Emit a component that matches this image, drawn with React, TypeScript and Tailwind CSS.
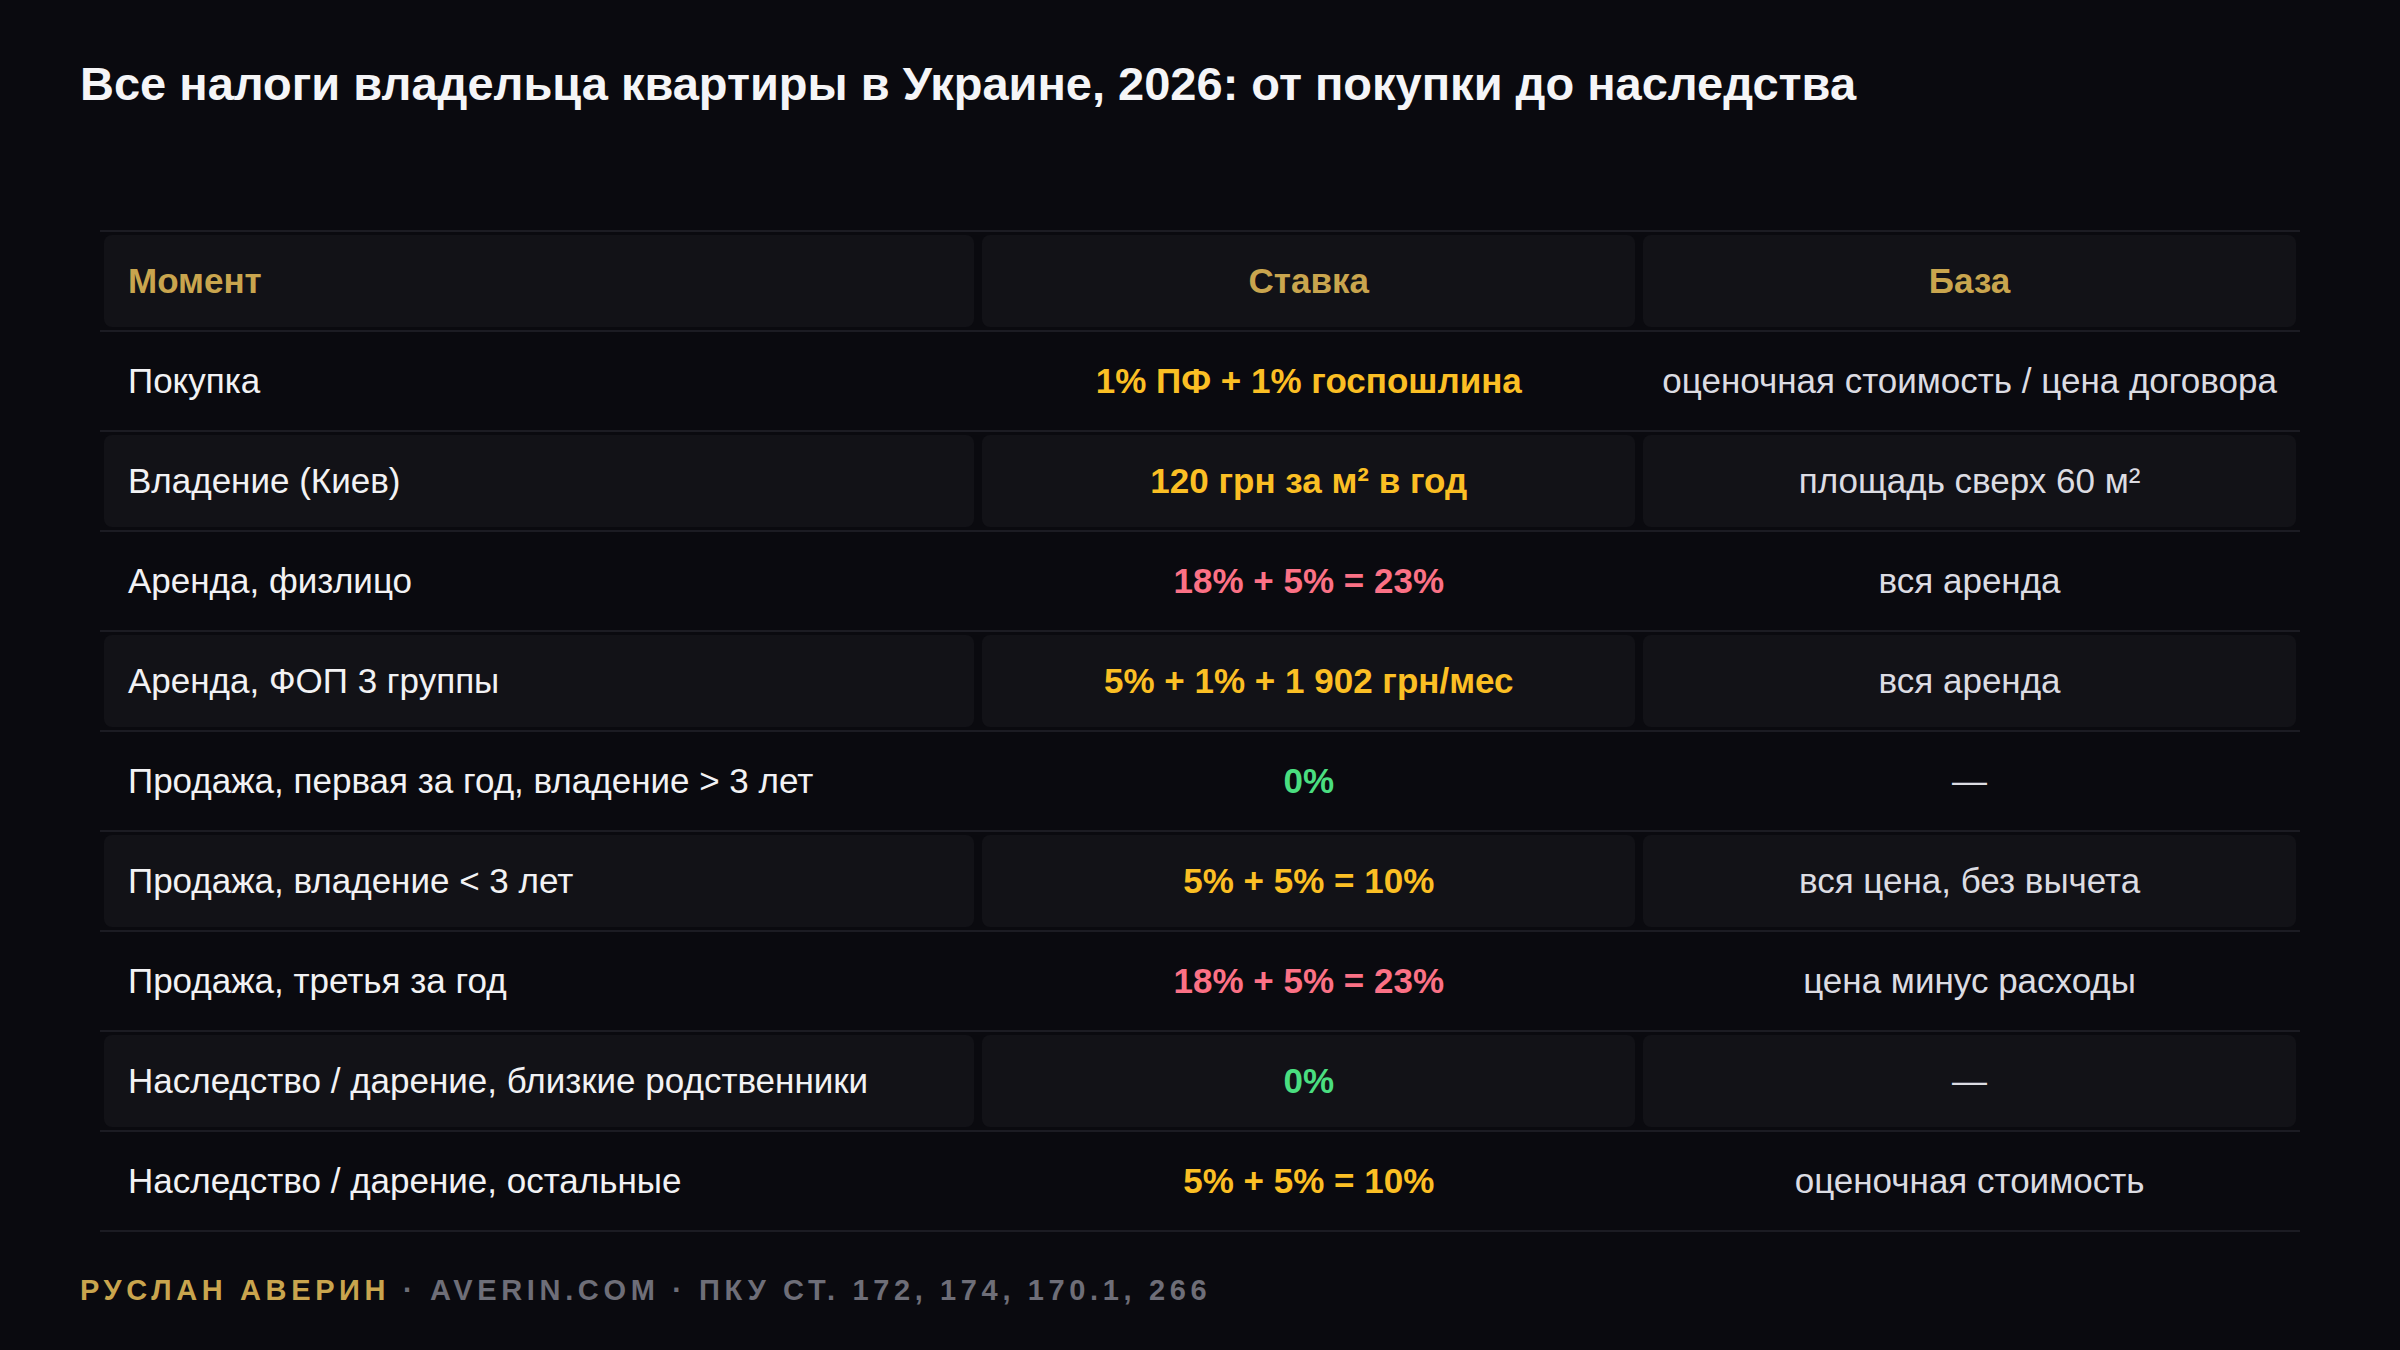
const rows = [
  { moment: 'Покупка', rate: '1% ПФ + 1% госпошлина', tone: 'yellow', base: 'оценочная стоимость / цена договора' },
  { moment: 'Владение (Киев)', rate: '120 грн за м² в год', tone: 'yellow', base: 'площадь сверх 60 м²' },
  { moment: 'Аренда, физлицо', rate: '18% + 5% = 23%', tone: 'red', base: 'вся аренда' },
  { moment: 'Аренда, ФОП 3 группы', rate: '5% + 1% + 1 902 грн/мес', tone: 'yellow', base: 'вся аренда' },
  { moment: 'Продажа, первая за год, владение > 3 лет', rate: '0%', tone: 'green', base: '—' },
  { moment: 'Продажа, владение < 3 лет', rate: '5% + 5% = 10%', tone: 'yellow', base: 'вся цена, без вычета' },
  { moment: 'Продажа, третья за год', rate: '18% + 5% = 23%', tone: 'red', base: 'цена минус расходы' },
  { moment: 'Наследство / дарение, близкие родственники', rate: '0%', tone: 'green', base: '—' },
  { moment: 'Наследство / дарение, остальные', rate: '5% + 5% = 10%', tone: 'yellow', base: 'оценочная стоимость' },
];

const toneClass: Record<string, string> = {
  yellow: 'text-[#fbbf24]',
  red: 'text-[#fb7185]',
  green: 'text-[#4ade80]',
};

export default function App() {
  return (
    <div
      className="min-h-screen w-full bg-[#0a0a0f] px-20 pt-[56px]"
      style={{ fontFamily: '"Liberation Sans", Arial, sans-serif' }}
    >
      {/* Title */}
      <h1 className="text-[47px] leading-[56px] font-bold text-[#f5f5f7]">
        Все налоги владельца квартиры в Украине, 2026: от покупки до наследства
      </h1>

      {/* Table */}
      <div className="mx-5 mt-[118px] border-t-2 border-[#1c1c23]">
        {/* Header */}
        <div className="border-b-2 border-[#1c1c23] px-[4px] py-[3px]">
          <div className="grid grid-cols-[4fr_3fr_3fr] gap-2 h-[92px]">
            <div className="flex items-center rounded-lg bg-[#121217] px-6 text-[35px] font-bold text-[#c9a54e]">
              Момент
            </div>
            <div className="flex items-center justify-center rounded-lg bg-[#121217] text-[35px] font-bold text-[#c9a54e]">
              Ставка
            </div>
            <div className="flex items-center justify-center rounded-lg bg-[#121217] text-[35px] font-bold text-[#c9a54e]">
              База
            </div>
          </div>
        </div>

        {rows.map((r, i) => {
          const shaded = i % 2 === 1;
          const cellBg = shaded ? 'bg-[#121217]' : '';
          return (
            <div key={i} className="border-b-2 border-[#1c1c23] px-[4px] py-[3px]">
              <div className="grid grid-cols-[4fr_3fr_3fr] gap-2 h-[92px]">
                <div className={`flex items-center rounded-lg px-6 text-[35px] text-[#f2f2f4] ${cellBg}`}>
                  {r.moment}
                </div>
                <div
                  className={`flex items-center justify-center rounded-lg text-[35px] font-bold ${toneClass[r.tone]} ${cellBg}`}
                >
                  {r.rate}
                </div>
                <div className={`flex items-center justify-center rounded-lg text-[35px] text-[#dcdce2] ${cellBg}`}>
                  {r.base}
                </div>
              </div>
            </div>
          );
        })}
      </div>

      {/* Footer */}
      <div className="mt-[41px] text-[29px] leading-[35px] font-bold uppercase tracking-[0.16em]">
        <span className="text-[#c9a54e]">Руслан Аверин</span>
        <span className="text-[#6e6e78]"> · averin.com · ПКУ ст. 172, 174, 170.1, 266</span>
      </div>
    </div>
  );
}
